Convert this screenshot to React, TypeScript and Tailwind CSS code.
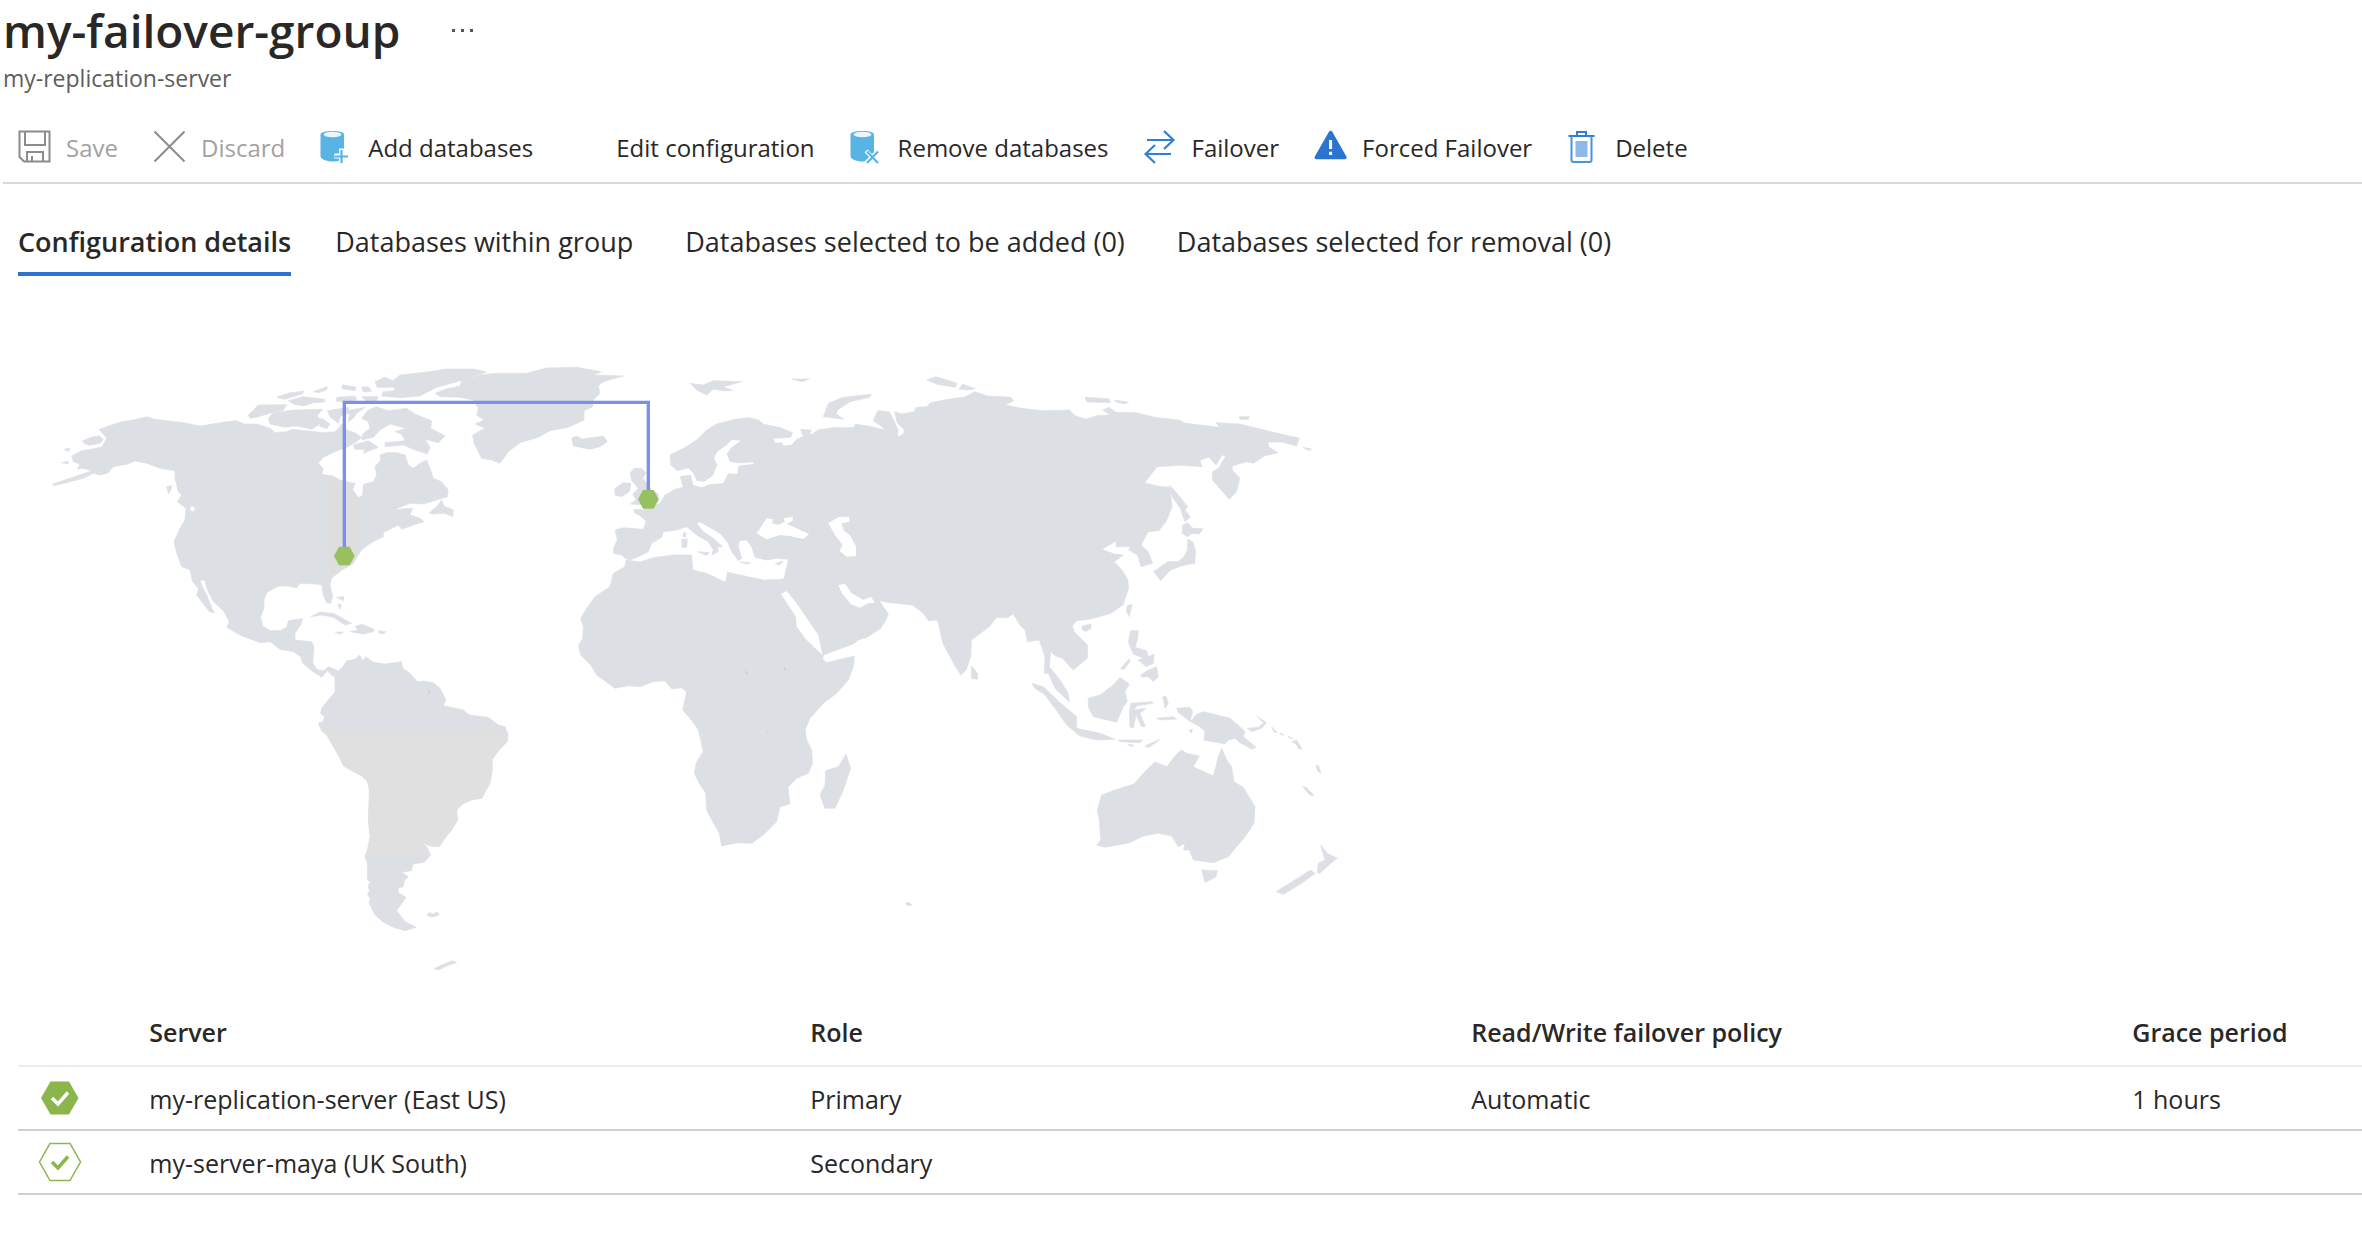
import { useState, type ReactNode } from "react";

const FONT = "font-['Open_Sans','Noto_Sans',sans-serif]";

/* ---------- toolbar icons ---------- */

const iconProps = { viewBox: "0 0 34 34", className: "h-[34px] w-[34px] shrink-0", "aria-hidden": true } as const;

const SaveIcon = () => (
  <svg {...iconProps} fill="none" stroke="#8c8c8c" strokeWidth="2">
    <path d="M1.5 1.5h30v30H6l-4.500-4.500z" />
    <path d="M7 1.500v13.500h20V1.500M9 31V22h16v9M14 31v-5" />
  </svg>
);

const DiscardIcon = () => (
  <svg {...iconProps} fill="none" stroke="#8c8c8c" strokeWidth="2">
    <path d="M1.500 1.500l30 30M31.500 1.500l-30 30" />
  </svg>
);

const DatabaseIcon = ({ mark }: { mark: "add" | "remove" }) => (
  <svg {...iconProps}>
    <path d="M0.500 5C0.500 2 5 1 12.500 1S24 2 24 5v22c0 3-5 4.500-11.500 4.500S0.500 29 0.500 26z" fill="#59b4e6" />
    <ellipse cx="12.500" cy="4.500" rx="9" ry="2.800" fill="#e9f6fc" />
    {mark === "add" ? (
      <>
        <path d="M21.500 18.500v14M14.500 26h14" stroke="#fff" strokeWidth="5" />
        <path d="M21.500 20v13M15 26.500h13" stroke="#59b4e6" strokeWidth="2.200" />
      </>
    ) : (
      <>
        <path d="M16 21l12 12M28 21L16 33" stroke="#fff" strokeWidth="4" />
        <path d="M17 21.500l11 11.500M28 21.500L17 33" stroke="#59b4e6" strokeWidth="2.200" />
      </>
    )}
  </svg>
);

const FailoverIcon = () => (
  <svg {...iconProps} fill="none" stroke="#2f7fd6" strokeWidth="2.200">
    <path d="M3 10h26M20 1l9.500 9L20 19M27 24H2M11 15l-9.500 9 9.500 9" />
  </svg>
);

const ForcedIcon = () => (
  <svg {...iconProps}>
    <path d="M14.800 2a2 2 0 0 1 3.600 0l14 24.500a1.800 1.800 0 0 1-1.500 2.700H2.300a1.800 1.800 0 0 1-1.500-2.700z" fill="#2b74cf" />
    <path d="M16.600 10v9M16.600 21.800v3.200" stroke="#fff" strokeWidth="3" />
  </svg>
);

const DeleteIcon = () => (
  <svg {...iconProps} fill="none" stroke="#2f7fd6" strokeWidth="2">
    <path d="M1.500 6h26M10 5.500V2h9v3.500" />
    <path d="M4.500 6.500V30a2 2 0 0 0 2 2h16a2 2 0 0 0 2-2V6.500" stroke="#4a93dc" />
    <path d="M8.500 11h12v16h-12z" fill="#8cb9e8" stroke="none" />
  </svg>
);

const ACTIONS: { label: string; icon: ReactNode; disabled?: boolean }[] = [
  { label: "Save", icon: <SaveIcon />, disabled: true },
  { label: "Discard", icon: <DiscardIcon />, disabled: true },
  { label: "Add databases", icon: <DatabaseIcon mark="add" /> },
  { label: "Edit configuration", icon: <span className="w-[34px]" /> },
  { label: "Remove databases", icon: <DatabaseIcon mark="remove" /> },
  { label: "Failover", icon: <FailoverIcon /> },
  { label: "Forced Failover", icon: <ForcedIcon /> },
  { label: "Delete", icon: <DeleteIcon /> },
];

const TABS = [
  "Configuration details",
  "Databases within group",
  "Databases selected to be added (0)",
  "Databases selected for removal (0)",
];

/* ---------- world map ---------- */

type Region = { name: string; transform: string; shapes: string[] };

const SOUTH_AMERICA =
  "165,175 165,215 155,228 140,245 125,265 122,282 135,290 128,305 115,310 125,333 140,345 165,388 180,415 190,437 215,452 245,468 262,483 268,510 265,600 270,650 262,690 255,710 262,730 262,780 272,785 265,795 268,815 262,822 270,835 268,850 285,885 310,907 340,922 375,932 408,922 375,905 350,872 378,832 355,818 355,805 370,800 373,780 385,770 365,757 395,752 398,732 432,727 452,705 440,680 425,668 450,678 478,680 498,650 515,630 533,600 530,570 548,552 575,540 605,535 630,490 637,450 637,418 655,392 682,365 684,345 675,320 655,315 625,292 568,285 550,270 490,257 498,240 480,205 460,188 430,183 412,185 390,160 368,145 365,125 330,130 315,132 280,127 257,110 250,122 238,105 225,118 200,123 188,140 175,152 160,148";

const REGIONS: Region[] = [
  {
    name: "North America",
    transform: "translate(0 0)",
    shapes: [
      "40,407 38,402 110,378 155,362 130,355 112,357 120,343 100,335 95,318 125,302 158,297 186,290 200,265 178,238 200,230 245,215 290,208 320,200 345,208 380,212 430,218 480,228 530,220 560,215 590,212 612,222 650,222 690,235 705,248 740,245 755,238 800,242 850,248 885,245 895,235 905,222 925,242 945,248 965,262 950,275 925,290 885,305 850,322 835,340 850,355 845,373 880,378 905,392 945,400 938,420 955,443 968,435 970,403 1000,395 1010,375 1005,350 1022,330 1020,315 1040,308 1070,308 1095,315 1105,345 1120,355 1140,340 1160,330 1170,355 1180,385 1205,395 1225,420 1222,440 1190,450 1150,462 1110,460 1060,480 1085,477 1118,475 1110,495 1140,505 1152,515 1120,525 1085,538 1075,525 1030,548 1030,560 1000,575 970,595 948,620 940,640 905,660 875,685 870,705 878,740 872,760 860,758 850,735 845,705 825,702 780,700 770,714 745,708 715,708 680,728 672,750 672,775 662,800 668,828 690,842 720,842 740,832 745,812 788,806 782,825 765,850 765,870 815,875 822,890 818,938 832,960 850,962 865,950 890,960 880,980 862,962 845,982 815,962 788,940 782,920 760,905 720,898 690,875 660,878 600,855 560,832 568,815 550,782 520,755 500,715 495,690 480,690 485,706 500,735 522,788 508,785 470,735 475,715 458,695 450,660 425,650 410,610 402,575 420,535 435,510 438,475 412,455 425,435 415,425 405,385 405,362 360,355 320,340 285,333 265,342 220,350 203,370 180,375 160,370 130,385 80,398",
      "128,272 158,260 178,258 190,268 180,280 150,286 135,282",
      "72,298 90,294 85,305",
      "65,338 85,334 84,342",
      "380,410 396,406 392,420 386,432",
      "1005,95 1035,82 1060,92 1080,75 1170,65 1215,57 1300,57 1340,66 1262,92 1190,112 1140,138 1080,143 1025,138 1030,125 1062,122 1065,112 1012,112",
      "625,195 655,165 740,164 730,180 690,190 650,202 630,205",
      "685,205 700,188 760,180 848,178 830,198 848,212 835,225 815,238 770,228 735,232 690,222",
      "710,142 750,128 792,124 785,132 735,148",
      "745,152 790,140 855,148 853,156 820,158 790,168 760,162",
      "820,125 862,110 860,120 835,128",
      "908,104 948,112 945,122 905,116",
      "965,112 985,110 995,124 970,126",
      "890,142 945,138 950,150 910,156 890,154",
      "965,140 1015,140 1010,152 985,160",
      "862,182 925,172 930,188 900,200 895,220 870,200",
      "845,205 870,222 860,236 838,228",
      "965,205 985,180 1010,170 1045,182 1100,175 1125,192 1175,212 1172,235 1215,258 1195,278 1155,268 1170,292 1162,312 1125,300 1090,285 1035,290 1035,278 1095,272 1085,252 1065,245 1098,235 1050,222 1020,240 1000,262 965,270 968,252 990,235 985,215",
      "940,285 985,272 1005,285 1015,292 970,310 975,298 945,298",
      "1168,488 1190,470 1205,450 1212,468 1240,480 1238,500 1215,490 1175,492",
      "812,800 840,786 880,790 935,820 915,825 880,802 845,795",
      "930,845 955,840 945,830 965,822 1002,838 1000,845 970,852",
      "885,846 910,846 900,853",
      "1015,842 1038,845 1030,852 1018,850",
      "890,742 912,740 910,752",
      "893,762 905,765 900,778",
      "930,180 975,172 950,190 940,205 925,215",
    ],
  },
  {
    name: "South America",
    transform: "translate(720 810)",
    shapes: [
      SOUTH_AMERICA,
      "440,884 450,878 460,882 470,875 478,884 465,890 450,890",
      "462,1046 485,1035 518,1022 530,1028 500,1038 475,1050",
    ],
  },
  {
    name: "Europe",
    transform: "translate(1170 0)",
    shapes: [
      "612,478 640,480 655,470 690,460 705,435 735,418 760,412 752,385 750,372 790,368 745,364 722,345 720,315 760,295 800,270 830,240 860,222 915,208 955,203 985,210 1000,222 1050,233 1088,248 1082,262 1030,265 1035,280 1055,278 1062,288 1085,285 1100,268 1120,262 1112,238 1143,240 1140,255 1170,245 1210,235 1270,232 1280,225 1400,250 1400,740 1180,740 1060,720 1050,690 1065,685 1075,628 1040,625 1010,630 975,622 965,590 950,570 928,572 925,590 935,625 925,632 905,605 895,580 870,550 835,530 808,515 802,522 820,545 850,565 878,590 862,590 865,605 845,615 850,600 835,575 800,555 770,530 740,540 700,545 695,562 665,580 655,605 625,620 600,630 585,625 575,615 550,610 552,590 562,570 555,540 580,533 640,538 648,515 635,500 612,487",
      "600,370 612,355 635,355 648,368 638,385 650,398 665,420 685,432 685,455 655,465 600,462 618,450 608,432 625,415 605,392",
      "555,415 580,398 603,400 598,425 575,440 555,435",
      "425,265 440,258 455,267 520,258 532,275 510,290 480,298 430,288",
      "15,130 45,118 90,108 95,92 150,75 200,70 290,70 350,54 440,52 515,65 490,75 580,78 520,95 505,108 510,130 490,150 488,170 462,182 462,210 415,232 360,242 325,262 270,278 235,305 210,340 185,330 155,325 132,280 128,255 165,235 135,222 162,210 140,195 145,175 130,150 90,142 30,140",
      "780,100 820,105 850,92 935,95 880,110 908,122 880,122 850,118 830,135 800,120",
      "1085,87 1138,87 1115,95",
      "755,568 772,568 770,592 756,592",
      "760,548 768,548 766,562 760,560",
      "803,605 838,608 830,616",
      "930,636 962,638 950,643",
      "1035,640 1060,634 1048,646",
      "775,388 795,385 790,402 775,400",
    ],
  },
  {
    name: "Africa and Arabia",
    transform: "translate(1560 570)",
    shapes: [
      "198,60 240,66 280,53 340,45 395,45 398,90 440,100 497,127 502,97 540,105 610,120 672,118 680,80 900,100 985,222 978,240 962,265 940,280 925,290 895,300 880,312 790,345 788,357 800,368 883,348 880,380 865,420 830,460 790,490 750,535 735,570 740,600 755,630 757,670 745,700 710,715 684,742 690,792 660,800 650,845 610,885 575,910 535,908 485,918 478,880 455,840 440,810 437,760 415,725 403,700 410,665 430,635 415,570 390,535 368,510 380,455 365,443 335,447 315,422 280,425 240,440 205,437 165,445 110,405 92,375 62,345 55,318 68,295 70,260 62,235 80,205 105,170 150,140 160,100 195,80",
      "858,643 872,685 850,750 825,805 795,805 780,765 795,735 797,692 835,680",
    ],
  },
  {
    name: "Asia",
    transform: "translate(2280 0) scale(1.0714 1)",
    shapes: [
      "0,262 20,265 50,240 100,232 150,238 155,222 200,230 235,240 230,230 205,212 218,182 250,185 262,210 275,240 272,262 290,252 292,240 272,218 265,185 285,192 320,185 325,172 355,170 365,158 430,145 460,142 490,125 525,138 590,142 598,152 575,165 620,175 680,182 755,180 770,197 800,208 830,197 868,195 848,180 865,172 885,187 940,188 1000,203 1060,210 1080,220 1175,232 1165,218 1230,222 1300,240 1350,253 1398,265 1390,288 1350,276 1310,276 1312,290 1338,308 1300,318 1270,340 1250,335 1210,348 1210,360 1232,385 1222,425 1202,448 1155,390 1155,365 1172,355 1192,318 1182,315 1165,345 1145,322 1120,330 1125,350 1070,346 1000,350 965,398 1000,408 1035,412 1042,470 1025,515 1005,542 975,545 955,585 975,605 987,640 955,650 945,615 920,600 925,590 885,590 885,573 845,598 880,612 905,615 880,635 905,665 918,690 920,715 905,765 870,790 810,808 775,812 762,828 768,845 805,885 805,925 765,960 735,925 715,918 702,905 698,950 728,990 751,1030 754,1055 714,1015 695,970 684,970 686,920 670,870 637,875 630,840 616,825 597,792 580,803 550,803 530,830 480,870 478,920 465,960 450,975 430,940 400,880 385,810 360,812 345,790 315,765 250,758 205,748 0,720",
      "1072,525 1085,518 1100,535 1128,536 1118,552 1098,550 1085,560 1070,550",
      "1085,568 1100,575 1108,605 1105,640 1065,648 1035,662 1010,692 990,665 1030,635 1060,635 1075,620 1085,600",
      "1035,405 1062,438 1085,470 1078,480 1093,500 1078,515 1065,475 1042,440",
      "355,90 380,80 405,88 440,100 435,112 385,103",
      "445,118 455,102 490,116 470,120",
      "798,142 865,146 870,158 803,156",
      "880,150 920,156 910,162 885,156",
      "1230,200 1258,200 1255,208 1232,208",
      "1408,292 1432,297 1425,302",
      "65,200 80,160 120,142 200,133 195,142 140,155 105,180 102,192 122,208",
      "916,768 930,762 922,800 914,782",
      "480,948 497,970 497,988 480,985",
      "790,828 815,822 815,835 800,845 790,838",
    ],
  },
  {
    name: "Oceania",
    transform: "translate(2880 630)",
    shapes: [
      "95,370 130,380 185,432 230,470 230,505 300,520 345,538 290,540 240,528 200,495 165,445 135,405 105,385",
      "265,415 300,405 340,375 360,352 388,372 375,395 382,425 370,440 350,487 280,470 265,440",
      "392,212 415,212 412,240 405,262 440,272 445,290 462,282 460,310 438,320 415,300 430,295 400,282 385,245",
      "422,345 445,330 470,320 475,350 460,365 445,350 425,352",
      "362,325 388,296 390,305 370,330",
      "392,430 455,425 460,430 410,437 402,450 438,445 420,460 436,500 425,500 408,465 400,505 390,500 388,460",
      "488,410 498,410 505,430 495,445",
      "470,475 520,470 530,477 480,480",
      "355,540 428,540 420,548 360,545",
      "435,558 480,538 465,550 445,563",
      "383,552 402,556 392,560",
      "530,445 570,442 578,455 570,485 552,470 535,458",
      "572,485 590,462 612,455 690,475 720,500 735,515 730,530 768,562 755,567 720,548 705,535 685,540 675,552 612,540 615,515 600,500",
      "742,505 775,502 790,488 770,468 800,488 785,505 755,515",
      "815,500 832,518 822,516",
      "840,518 852,525 842,524",
      "862,528 880,536 870,534",
      "875,545 890,540 906,568 896,566 888,552",
      "948,615 956,618 963,640 953,634",
      "908,680 918,682 942,706 930,706",
      "568,510 578,508 574,520",
      "545,570 560,580 598,588 580,620 640,648 655,590 665,565 680,600 695,620 702,665 730,682 765,740 762,790 735,830 685,890 640,908 580,900 568,870 550,870 555,850 535,860 515,828 475,820 430,828 390,848 315,862 290,855 302,840 298,780 292,750 305,705 345,690 402,672 430,640 465,605 500,620 530,582",
      "605,930 652,932 648,950 615,968",
      "962,855 982,880 1012,895 990,912 960,940 952,938 955,910 975,900",
      "828,995 900,950 932,930 945,940 905,970 850,1003",
      "-283,1028 -272,1028 -264,1036 -280,1036",
    ],
  },
];

const SEAS: Region[] = [
  {
    name: "European seas",
    transform: "translate(1170 0)",
    shapes: [
      "740,364 775,355 790,370 800,392 822,395 848,378 862,345 852,325 862,305 890,285 905,270 932,272 905,292 890,312 900,335 925,340 970,337 970,342 925,347 922,372 895,370 880,400 840,403 815,412 790,405 782,375 750,378",
      "980,550 1010,505 1030,508 1025,520 1045,525 1065,515 1060,505 1088,500 1088,512 1070,522 1100,535 1137,552 1120,567 1080,558 1050,555 1010,568",
      "1195,520 1225,502 1258,500 1258,515 1235,520 1240,540 1262,558 1278,590 1278,618 1250,620 1228,602 1238,585 1215,555",
    ],
  },
  {
    name: "Arabian seas",
    transform: "translate(1560 570)",
    shapes: [
      "663,162 680,153 710,190 740,235 775,285 787,345 740,300 710,260 708,230",
      "835,135 855,132 875,160 910,180 932,170 945,188 925,190 900,203 872,192 845,158",
    ],
  },
  { name: "Salish Sea", transform: "translate(0 0)", shapes: ["450,474 456,468 464,474 462,484 452,482"] },
];

const Shapes = ({ regions }: { regions: Region[] }) => (
  <>
    {regions.map((region) => (
      <g key={region.name} transform={region.transform}>
        {region.shapes.map((points) => (
          <polygon key={points} points={points} />
        ))}
      </g>
    ))}
  </>
);

const Marker = ({ x, y }: { x: number; y: number }) => (
  <polygon
    transform={`translate(${x} ${y})`}
    points="-31,0 -16,-28 16,-28 31,0 16,28 -16,28"
    fill="#98c05f"
  />
);

const WorldMap = () => (
  <svg
    viewBox="0 0 3960 1920"
    role="img"
    aria-label="Map linking East US and UK South"
    className="block h-auto w-full max-w-[1320px]"
  >
    <defs>
      <clipPath id="south-america">
        <polygon points={SOUTH_AMERICA} />
      </clipPath>
    </defs>
    <g fill="#dce0e5" stroke="#dce0e5" strokeWidth="2" strokeLinejoin="round">
      <Shapes regions={REGIONS} />
    </g>
    <g transform="translate(720 810)" clipPath="url(#south-america)">
      <rect x="100" y="335" width="600" height="377" fill="#e0e0e0" />
    </g>
    <polygon points="865,378 905,392 938,400 938,420 955,443 960,443 960,608 940,640 905,660 890,672 865,672" fill="#dedede" />
    <g fill="#fff">
      <Shapes regions={SEAS} />
    </g>
    <g fill="#c9ced3">
      <path d="M2112 960l12 8-4 4zM2232 950l5 8-5 5zM2178 1140l6 2-3 5zM1165 1015q10 10-2 24q4-12 2-24z" />
    </g>
    <path d="M913 600V157H1825V430" fill="none" stroke="#7b90ec" strokeWidth="10" />
    <Marker x={913} y={618} />
    <Marker x={1825} y={448} />
  </svg>
);

/* ---------- server table ---------- */

const StatusIcon = ({ filled }: { filled: boolean }) => (
  <svg viewBox="0 0 44 40" className="h-10 w-11" role="img" aria-label={filled ? "Primary online" : "Secondary online"}>
    <path
      d={filled ? "M3 20L12.500 3.500h18.500L40.500 20L31 36.500H12.500z" : "M1.500 20L12 1.500h20L42.500 20L32 38.500H12z"}
      fill={filled ? "#8ab64c" : "#fff"}
      stroke="#8ab64c"
      strokeWidth={filled ? 0 : 1.5}
    />
    <path d="M14 20l6 6 10-11.500" fill="none" stroke={filled ? "#fff" : "#8ab64c"} strokeWidth="3.500" />
  </svg>
);

const SERVERS = [
  { server: "my-replication-server (East US)", role: "Primary", policy: "Automatic", grace: "1 hours" },
  { server: "my-server-maya (UK South)", role: "Secondary", policy: "", grace: "" },
];

export default function App() {
  const [tab, setTab] = useState(0);
  return (
    <main className={`${FONT} min-h-screen overflow-x-hidden bg-white text-[#292827]`}>
      <header className="pl-[3px]">
        <div className="flex items-center gap-[52px]">
          <h1 className="text-[46px] leading-[60px] font-semibold">my-failover-group</h1>
          <button type="button" aria-label="More options" className="flex gap-1.5">
            <span className="h-[3px] w-[3px] bg-[#555]" />
            <span className="h-[3px] w-[3px] bg-[#555]" />
            <span className="h-[3px] w-[3px] bg-[#555]" />
          </button>
        </div>
        <p className="text-[23px] leading-9 text-[#5f5d5b]">my-replication-server</p>
        <div className="mt-4 flex h-[72px] items-center gap-[35px] border-b-2 border-[#d9d9d9] pl-[15px] whitespace-nowrap">
          {ACTIONS.map((action) => (
            <button
              key={action.label}
              type="button"
              disabled={action.disabled}
              className="flex items-center gap-3.5 text-2xl leading-9 disabled:text-[#a3a2a0]"
            >
              {action.icon}
              <span className="pt-0.5">{action.label}</span>
            </button>
          ))}
        </div>
      </header>

      <div role="tablist" className="mt-8 flex gap-11 pl-[18px] whitespace-nowrap">
        {TABS.map((label, i) => (
          <button
            key={label}
            type="button"
            role="tab"
            aria-selected={tab === i}
            onClick={() => setTab(i)}
            className={
              tab === i
                ? "border-b-4 border-[#2b74cf] pb-1 text-[27px] leading-[52px] font-semibold"
                : "border-b-4 border-transparent pr-2 pb-1 text-[27px] leading-[52px]"
            }
          >
            {label}
          </button>
        ))}
      </div>

      <section className="mt-[74px] pl-10">
        <WorldMap />
      </section>

      <div className="mt-2 pl-[18px]">
        <table className="w-full table-fixed border-collapse text-left text-[25px] leading-9 whitespace-nowrap">
          <colgroup>
            <col className="w-[5.6%]" />
            <col className="w-[28.2%]" />
            <col className="w-[28.2%]" />
            <col className="w-[28.2%]" />
            <col />
          </colgroup>
          <thead>
            <tr className="h-[68px] border-b-2 border-[#ececec]">
              <th aria-label="Status" />
              <th className="font-semibold">Server</th>
              <th className="font-semibold">Role</th>
              <th className="font-semibold">Read/Write failover policy</th>
              <th className="font-semibold">Grace period</th>
            </tr>
          </thead>
          <tbody>
            {SERVERS.map((row, i) => (
              <tr key={row.server} className="h-16 border-b-2 border-[#cfcfcf]">
                <td className="pl-5">
                  <StatusIcon filled={i === 0} />
                </td>
                <td className="pt-0.5">{row.server}</td>
                <td className="pt-0.5">{row.role}</td>
                <td className="pt-0.5">{row.policy}</td>
                <td className="pt-0.5">{row.grace}</td>
              </tr>
            ))}
          </tbody>
        </table>
      </div>
    </main>
  );
}
